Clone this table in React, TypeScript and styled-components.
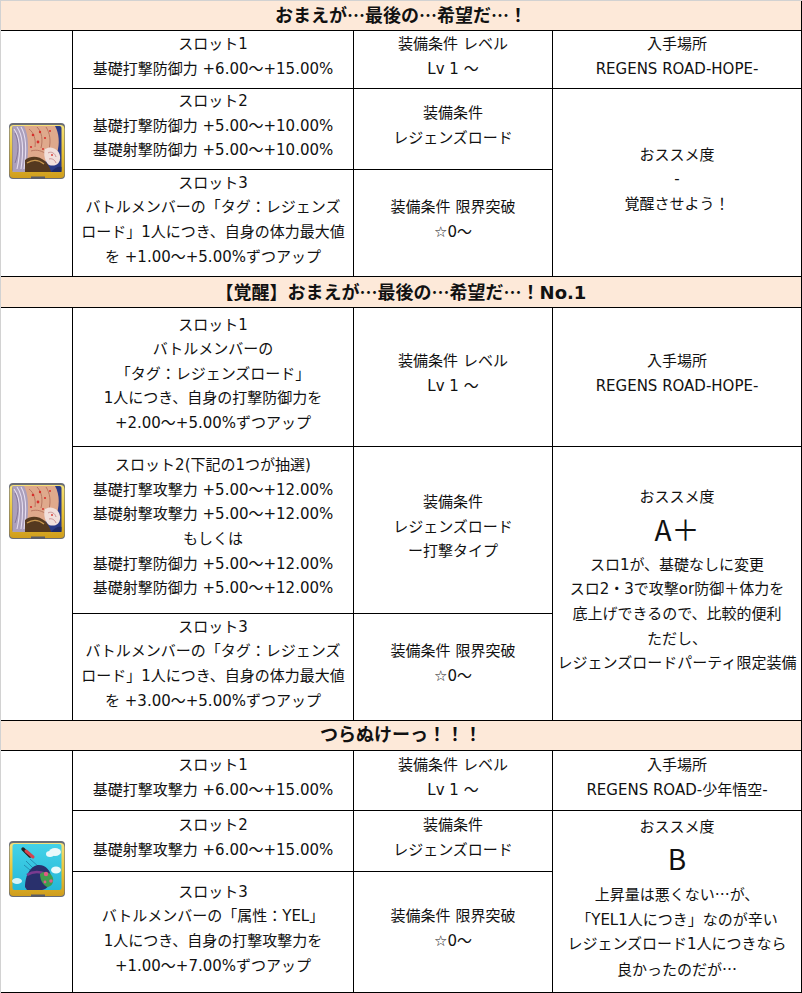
import React, { useId } from 'react';
import styled, { createGlobalStyle } from 'styled-components';

interface SlotRow {
  height: number;
  slot: string[];
  cond: string[];
}

interface Section {
  title: string;
  titleHeight: number;
  icon: 'muscle' | 'sky';
  rows: SlotRow[];
  place: string[];
  grade?: string;
  rating: string[];
  ratingAfter?: string[];
}

const sections: Section[] = [
  {
    title: 'おまえが…最後の…希望だ…！',
    titleHeight: 30,
    icon: 'muscle',
    rows: [
      { height: 58, slot: ['スロット1', '基礎打撃防御力 +6.00～+15.00%'], cond: ['装備条件 レベル', 'Lv 1 ～'] },
      {
        height: 81,
        slot: ['スロット2', '基礎打撃防御力 +5.00～+10.00%', '基礎射撃防御力 +5.00～+10.00%'],
        cond: ['装備条件', 'レジェンズロード'],
      },
      {
        height: 107,
        slot: ['スロット3', 'バトルメンバーの「タグ：レジェンズ', 'ロード」1人につき、自身の体力最大値', 'を +1.00～+5.00%ずつアップ'],
        cond: ['装備条件 限界突破', '☆0～'],
      },
    ],
    place: ['入手場所', 'REGENS ROAD-HOPE-'],
    rating: ['おススメ度', '-', '覚醒させよう！'],
  },
  {
    title: '【覚醒】おまえが…最後の…希望だ…！No.1',
    titleHeight: 31,
    icon: 'muscle',
    rows: [
      {
        height: 139,
        slot: ['スロット1', 'バトルメンバーの', '「タグ：レジェンズロード」', '1人につき、自身の打撃防御力を', '+2.00～+5.00%ずつアップ'],
        cond: ['装備条件 レベル', 'Lv 1 ～'],
      },
      {
        height: 167,
        slot: [
          'スロット2(下記の1つが抽選)',
          '基礎打撃攻撃力 +5.00～+12.00%',
          '基礎射撃攻撃力 +5.00～+12.00%',
          'もしくは',
          '基礎打撃防御力 +5.00～+12.00%',
          '基礎射撃防御力 +5.00～+12.00%',
        ],
        cond: ['装備条件', 'レジェンズロード', 'ー打撃タイプ'],
      },
      {
        height: 107,
        slot: ['スロット3', 'バトルメンバーの「タグ：レジェンズ', 'ロード」1人につき、自身の体力最大値', 'を +3.00～+5.00%ずつアップ'],
        cond: ['装備条件 限界突破', '☆0～'],
      },
    ],
    place: ['入手場所', 'REGENS ROAD-HOPE-'],
    rating: ['おススメ度'],
    grade: 'A＋',
    ratingAfter: ['スロ1が、基礎なしに変更', 'スロ2・3で攻撃or防御＋体力を', '底上げできるので、比較的便利', 'ただし、', 'レジェンズロードパーティ限定装備'],
  },
  {
    title: 'つらぬけーっ！！！',
    titleHeight: 30,
    icon: 'sky',
    rows: [
      { height: 60, slot: ['スロット1', '基礎打撃攻撃力 +6.00～+15.00%'], cond: ['装備条件 レベル', 'Lv 1 ～'] },
      { height: 61, slot: ['スロット2', '基礎射撃攻撃力 +6.00～+15.00%'], cond: ['装備条件', 'レジェンズロード'] },
      {
        height: 121,
        slot: ['スロット3', 'バトルメンバーの「属性：YEL」', '1人につき、自身の打撃攻撃力を', '+1.00～+7.00%ずつアップ'],
        cond: ['装備条件 限界突破', '☆0～'],
      },
    ],
    place: ['入手場所', 'REGENS ROAD-少年悟空-'],
    rating: ['おススメ度'],
    grade: 'B',
    ratingAfter: ['上昇量は悪くない…が、', '「YEL1人につき」なのが辛い', 'レジェンズロード1人につきなら', '良かったのだが…'],
  },
];

const GlobalStyle = createGlobalStyle`
  body {
    margin: 0;
    background: #fff;
    font-family: 'DejaVu Sans', 'Noto Sans CJK JP', sans-serif;
    color: #111;
  }
`;

const Table = styled.table`
  width: 802px;
  border-collapse: separate;
  border-spacing: 0;
  table-layout: fixed;
  border-top: 1px solid #d2d2d2;
  border-left: 1px solid #d2d2d2;
  font-size: 15px;
`;

const Col = styled.col<{ $w: number }>`
  width: ${(p) => p.$w}px;
`;

const Row = styled.tr<{ $h: number }>`
  height: ${(p) => p.$h}px;
`;

const Cell = styled.td`
  box-sizing: border-box;
  padding: 0 0 6px;
  border-right: 1px solid #000;
  border-bottom: 1px solid #000;
  text-align: center;
  vertical-align: middle;
  line-height: 24.6px;
  white-space: nowrap;
`;

const TitleCell = styled(Cell)`
  padding: 0 0 1px;
  background: #fde9d9;
  font-size: 18px;
  font-weight: 700;
  line-height: 22px;
`;

const Line = styled.div``;

// 三点リーダーは和文フォントで全角表示
const Dots = styled.span`
  font-family: 'Noto Sans CJK JP', sans-serif;
`;

const Grade = styled.div`
  font-family: 'Noto Sans CJK JP', sans-serif;
  font-size: 28px;
  line-height: 39px;
  padding-bottom: 4px;
`;

const IconWrap = styled.div`
  width: 56px;
  height: 56px;
  margin: 0 auto;
  display: flex;
`;

function Text({ value }: { value: string }) {
  const parts = value.split('…');
  return (
    <>
      {parts.map((p, i) => (
        <React.Fragment key={i}>
          {p}
          {i < parts.length - 1 && <Dots>…</Dots>}
        </React.Fragment>
      ))}
    </>
  );
}

function Lines({ items }: { items: string[] }) {
  return (
    <>
      {items.map((t, i) => (
        <Line key={i}>
          <Text value={t} />
        </Line>
      ))}
    </>
  );
}

function Frame({ id }: { id: string }) {
  return (
    <>
      <defs>
        <linearGradient id={`g${id}`} x1="0" y1="0" x2="0" y2="1">
          <stop offset="0" stopColor="#f6e27a" />
          <stop offset="0.55" stopColor="#e8c233" />
          <stop offset="1" stopColor="#cf9d1d" />
        </linearGradient>
      </defs>
      <rect x="0" y="0" width="56" height="56" rx="4" fill="#6a6d76" />
      <rect x="0.6" y="2" width="54.8" height="53" rx="4" fill={`url(#g${id})`} />
      <rect x="22" y="53.5" width="14" height="2.5" fill="#5a5c66" />
    </>
  );
}

function MuscleIcon() {
  const id = useId().replace(/:/g, '');
  return (
    <IconWrap>
      <svg width="56" height="56" viewBox="0 0 56 56">
        <Frame id={id} />
        <rect x="3.5" y="3" width="49" height="46" rx="2" fill="#2a3a86" />
        <path d="M10 3 L46 3 C50 10 51 20 48 30 C44 38 30 42 14 42 L10 42 Z" fill="#dfa98c" />
        <path d="M3.5 3 L15 3 C20 12 20 28 17 49 L3.5 49 Z" fill="#ab9fbb" />
        <path d="M5 6 C11 14 12 28 8 46 M8 4 C14 12 15 26 12 46 M12 4 C17 12 18 26 15 46" stroke="#e6def0" strokeWidth="1.1" fill="none" />
        <path d="M6 10 C10 18 10 30 6 40" stroke="#7d6f92" strokeWidth="0.8" fill="none" />
        <path d="M20 6 C25 10 27 16 26 24 M28 4 C33 9 34 17 32 25 M37 4 C41 10 42 18 40 26 M22 28 C28 26 34 28 38 32" stroke="#b3705c" strokeWidth="0.9" fill="none" />
        <circle cx="24" cy="12" r="1.3" fill="#d6302c" />
        <circle cx="31" cy="9" r="1.2" fill="#d6302c" />
        <circle cx="29" cy="19" r="1.4" fill="#d6302c" />
        <circle cx="36" cy="15" r="1.1" fill="#d6302c" />
        <circle cx="22" cy="24" r="1.1" fill="#d6302c" />
        <circle cx="41" cy="8" r="1" fill="#d6302c" />
        <circle cx="34" cy="26" r="1" fill="#d6302c" />
        <path d="M36 26 C42 22 50 26 51 33 C52 41 46 44 40 42 C36 39 34 31 36 26 Z" fill="#f1e0dc" />
        <path d="M39 30 C42 28 46 30 47 34 M40 36 C43 35 46 37 47 40" stroke="#c68f90" strokeWidth="0.9" fill="none" />
        <circle cx="43" cy="32" r="0.9" fill="#d6302c" />
        <path d="M16 37 C22 32 30 33 36 38 C39 41 41 45 42 49 L16 49 Z" fill="#55391f" />
        <path d="M18 40 C24 36 30 37 35 41" stroke="#c9984f" strokeWidth="1.4" fill="none" />
        <path d="M42 49 C46 44 50 43 52.5 44 L52.5 49 Z" fill="#1e2a66" />
      </svg>
    </IconWrap>
  );
}

function SkyIcon() {
  const id = useId().replace(/:/g, '');
  return (
    <IconWrap>
      <svg width="56" height="56" viewBox="0 0 56 56">
        <defs>
          <linearGradient id={`s${id}`} x1="0" y1="0" x2="0" y2="1">
            <stop offset="0" stopColor="#44d2e8" />
            <stop offset="1" stopColor="#26b8d8" />
          </linearGradient>
        </defs>
        <Frame id={id} />
        <rect x="3.5" y="3" width="49" height="46" rx="2" fill={`url(#s${id})`} />
        <ellipse cx="46" cy="11" rx="6" ry="4" fill="#eaf9fb" />
        <ellipse cx="41" cy="13" rx="4" ry="3" fill="#eaf9fb" />
        <ellipse cx="47" cy="29" rx="5" ry="3.5" fill="#eaf9fb" />
        <ellipse cx="8" cy="40" rx="5" ry="3" fill="#d6f3f8" />
        <path d="M14 8 L21 15" stroke="#222" strokeWidth="3.4" strokeLinecap="round" />
        <path d="M17 10 L24 16" stroke="#d6434f" strokeWidth="3" strokeLinecap="round" />
        <path d="M17 20 L24 27 M21 18 L30 26 M15 24 L21 29" stroke="#1f7fa6" strokeWidth="0.8" />
        <path d="M16 46 C16 34 22 24 30 24 C37 24 42 30 42 37 C42 44 38 48 33 49 L18 49 Z" fill="#29306c" />
        <path d="M18 34 C24 30 30 30 37 33" stroke="#7a3b8f" strokeWidth="2.5" fill="none" />
        <path d="M31 33 C35 29 42 31 44 37 C45 42 42 46 38 46 C34 44 31 39 31 33 Z" fill="#3f9c4e" />
        <circle cx="37" cy="33" r="2.2" fill="#e15a86" />
        <circle cx="42" cy="40" r="1.8" fill="#e15a86" />
        <circle cx="36" cy="41" r="1.4" fill="#e15a86" />
      </svg>
    </IconWrap>
  );
}

function SectionBlock({ section }: { section: Section }) {
  const total = section.rows.length;
  return (
    <>
      <Row $h={section.titleHeight}>
        <TitleCell colSpan={4}>
          <Text value={section.title} />
        </TitleCell>
      </Row>
      {section.rows.map((row, i) => (
        <Row key={i} $h={row.height}>
          {i === 0 && <Cell rowSpan={total}>{section.icon === 'muscle' ? <MuscleIcon /> : <SkyIcon />}</Cell>}
          <Cell>
            <Lines items={row.slot} />
          </Cell>
          <Cell>
            <Lines items={row.cond} />
          </Cell>
          {i === 0 && (
            <Cell>
              <Lines items={section.place} />
            </Cell>
          )}
          {i === 1 && (
            <Cell rowSpan={total - 1}>
              <Lines items={section.rating} />
              {section.grade && <Grade>{section.grade}</Grade>}
              {section.ratingAfter && <Lines items={section.ratingAfter} />}
            </Cell>
          )}
        </Row>
      ))}
    </>
  );
}

export default function App() {
  return (
    <>
      <GlobalStyle />
      <Table>
        <colgroup>
          <Col $w={72} />
          <Col $w={281} />
          <Col $w={199} />
          <Col $w={249} />
        </colgroup>
        <tbody>
          {sections.map((s, i) => (
            <SectionBlock key={i} section={s} />
          ))}
        </tbody>
      </Table>
    </>
  );
}
